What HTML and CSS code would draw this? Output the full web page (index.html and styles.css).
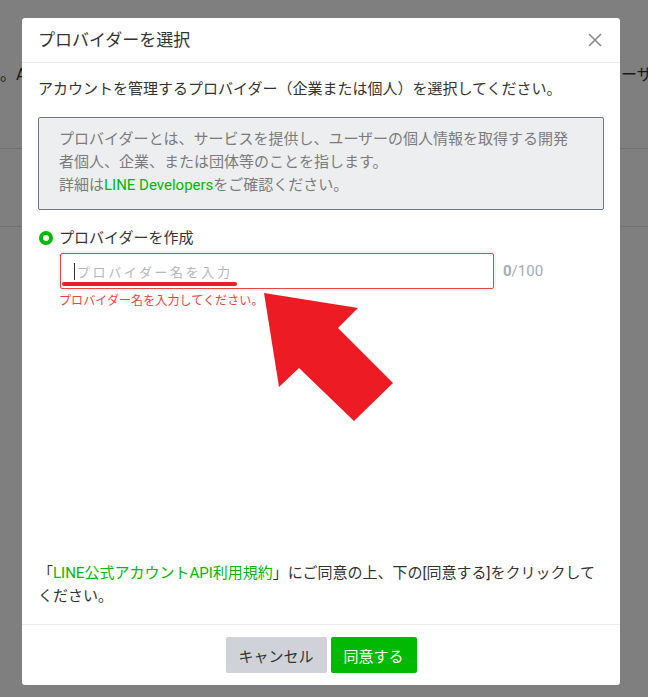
FILE: index.html
```html
<!DOCTYPE html>
<html lang="ja">
<head>
<meta charset="utf-8">
<title>プロバイダーを選択</title>
<link rel="stylesheet" href="styles.css">
</head>
<body>
<div class="bg-page">
  <div class="bg-row"><span class="bg-left">。A</span><span class="bg-right">ーザー</span></div>
  <div class="bg-rule rule-1"></div>
  <div class="bg-rule rule-2"></div>
</div>
<div class="overlay"></div>
<div class="modal">
  <div class="modal-header">
    <h2 class="modal-title">プロバイダーを選択</h2>
    <button class="close" aria-label="閉じる">
      <svg width="14" height="14" viewBox="0 0 14 14"><path d="M1 1 L13 13 M13 1 L1 13" stroke="#8a8a8a" stroke-width="1.6" fill="none"/></svg>
    </button>
  </div>
  <div class="modal-body">
    <p class="lead">アカウントを管理するプロバイダー（企業または個人）を選択してください。</p>
    <div class="info">プロバイダーとは、サービスを提供し、ユーザーの個人情報を取得する開発者個人、企業、または団体等のことを指します。<br>詳細は<a class="link">LINE Developers</a>をご確認ください。</div>
    <div class="radio-row"><span class="radio"></span><span class="radio-label">プロバイダーを作成</span></div>
    <div class="field-row">
      <div class="input"><span class="caret"></span><span class="placeholder">プロバイダー名を入力</span></div>
      <span class="counter"><b>0</b>/100</span>
    </div>
    <div class="error">プロバイダー名を入力してください。</div>
    <div class="spacer"></div>
    <p class="terms">「<a class="link">LINE公式アカウントAPI利用規約</a>」にご同意の上、下の[同意する]をクリックしてください。</p>
  </div>
  <div class="modal-footer">
    <button class="btn btn-cancel">キャンセル</button>
    <button class="btn btn-agree">同意する</button>
  </div>
</div>
<svg class="annot" width="648" height="697" viewBox="0 0 648 697">
  <line x1="64" y1="284" x2="235" y2="284" stroke="#e8202a" stroke-width="4" stroke-linecap="round"/>
  <polygon points="264,293 358,308 338,328 393,383 354,421 299,368 279,387" fill="#ed1c24"/>
</svg>
</body>
</html>
```
FILE: styles.css
```css
* { box-sizing: border-box; }
html, body { margin: 0; padding: 0; }
body {
  width: 648px;
  height: 697px;
  overflow: hidden;
  position: relative;
  background: #fff;
  font-family: Roboto, "Noto Sans CJK JP", sans-serif;
  color: #333;
}
.bg-page { padding-top: 64px; }
.bg-row {
  display: flex;
  height: 22px;
  line-height: 22px;
  font-size: 16px;
  color: #333;
}
.bg-right {
  margin-left: auto;
  width: 27px;
  overflow: hidden;
  white-space: nowrap;
}
.bg-rule { border-bottom: 1px solid #e2e2e2; }
.rule-1 { margin-top: 62px; }
.rule-2 { margin-top: 77px; }
.overlay {
  position: absolute;
  inset: 0;
  background: rgba(0, 0, 0, 0.5);
}
.modal {
  position: absolute;
  left: 22px;
  top: 18px;
  width: 598px;
  height: 667px;
  background: #fff;
  border-radius: 3px;
  display: flex;
  flex-direction: column;
}
.modal-header {
  height: 45px;
  border-bottom: 1px solid #ececec;
  display: flex;
  align-items: center;
  padding: 0 18px 0 16px;
}
.modal-title {
  margin: 0;
  font-size: 17px;
  font-weight: normal;
  color: #333;
  flex: 1;
  line-height: 24px;
}
.close {
  border: 0;
  background: none;
  padding: 0;
  width: 14px;
  height: 14px;
  display: flex;
}
.modal-body {
  flex: 1;
  display: flex;
  flex-direction: column;
  padding: 15px 16px 16px;
}
.lead {
  margin: 0;
  font-size: 15px;
  line-height: 22px;
}
.info {
  margin-top: 17px;
  background: #edeef0;
  border: 1px solid #6e7690;
  border-radius: 2px;
  padding: 10px 20px 12px;
  font-size: 15px;
  line-height: 23px;
  color: #7b7b7b;
}
.link { color: #00b900; text-decoration: none; }
.radio-row {
  margin-top: 17px;
  display: flex;
  align-items: center;
  gap: 6px;
  height: 22px;
  padding-left: 1px;
}
.radio {
  width: 14px;
  height: 14px;
  border-radius: 50%;
  border: 4px solid #00b900;
  background: #fff;
}
.radio-label { font-size: 15px; line-height: 22px; }
.field-row {
  margin-top: 4px;
  padding-left: 22px;
  display: flex;
  align-items: center;
  gap: 9px;
}
.input {
  width: 434px;
  height: 36px;
  border: 1px solid #e8453c;
  border-radius: 2px;
  display: flex;
  align-items: center;
  padding-left: 13px;
  box-shadow: 0 0 0 2px #f2f3f5;
}
.caret {
  width: 1px;
  height: 17px;
  background: #333;
  margin-right: 2px;
}
.placeholder {
  font-size: 13px;
  letter-spacing: 2.6px;
  color: #b3b7bd;
}
.counter {
  font-size: 15px;
  color: #a5acb6;
}
.counter b { font-weight: bold; }
.error {
  margin-top: 4px;
  padding-left: 21px;
  font-size: 12px;
  letter-spacing: 0.1px;
  line-height: 16px;
  color: #e8453c;
}
.spacer { flex: 1; }
.terms {
  margin: 0;
  font-size: 15px;
  line-height: 23px;
}
.modal-footer {
  border-top: 1px solid #ececec;
  padding: 12px;
  display: flex;
  justify-content: center;
  gap: 4px;
}
.btn {
  height: 36px;
  border: 0;
  border-radius: 2px;
  padding: 0 13px;
  font-family: inherit;
  font-size: 15px;
}
.btn-cancel { background: #cfd3d9; color: #333; width: 101px; }
.btn-agree { background: #00b900; color: #fff; width: 86px; }
.annot {
  position: absolute;
  left: 0;
  top: 0;
  pointer-events: none;
}
```
